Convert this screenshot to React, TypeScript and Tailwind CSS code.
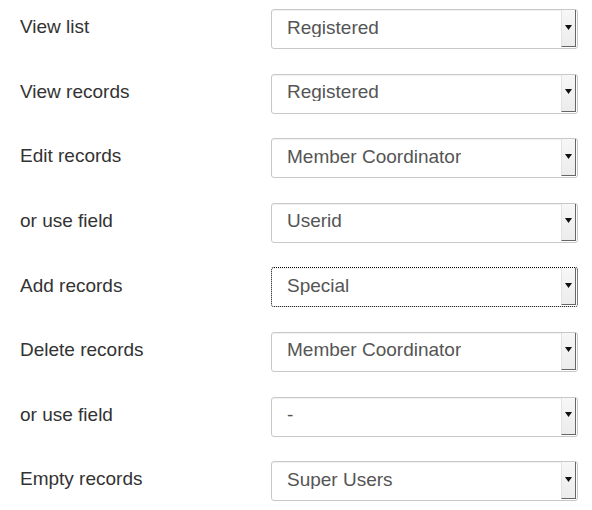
import React from 'react';

const rows: Array<{ label: string; value: string; focused?: boolean }> = [
  { label: 'View list', value: 'Registered' },
  { label: 'View records', value: 'Registered' },
  { label: 'Edit records', value: 'Member Coordinator' },
  { label: 'or use field', value: 'Userid' },
  { label: 'Add records', value: 'Special', focused: true },
  { label: 'Delete records', value: 'Member Coordinator' },
  { label: 'or use field', value: '-' },
  { label: 'Empty records', value: 'Super Users' },
];

const FakeSelect = ({ value, focused }: { value: string; focused?: boolean }) => (
  <div
    className={`relative flex h-[40px] w-[307px] items-center rounded-[3px] bg-white pl-[15px] text-[19px] text-[#555] shadow-[inset_0_1px_1px_rgba(0,0,0,0.06)] ${
      focused ? 'border border-dotted border-black' : 'border border-[#c8c8c8]'
    }`}
  >
    <span className="-mt-[4px] truncate leading-none">{value}</span>
    <div className="absolute right-[1px] top-[0px] bottom-[1px] flex w-[15px] items-center justify-center border-l border-l-[#e2e2e2] border-r-[1.5px] border-r-[#666] border-b-[1.5px] border-b-[#666] bg-gradient-to-b from-[#f7f7f7] to-[#ececec]">
      <svg width="7" height="5" viewBox="0 0 7 5" className="-mt-[2px]">
        <path d="M0 0h7L3.5 5z" fill="#111" />
      </svg>
    </div>
  </div>
);

export default function App() {
  return (
    <div
      className="h-[510px] w-[592px] bg-white pt-[9px]"
      style={{ fontFamily: '"Liberation Sans", Arial, sans-serif' }}
    >
      <div className="flex flex-col gap-[24.6px]">
        {rows.map((row, i) => (
          <div key={i} className="flex items-center">
            <div className="w-[271px] pl-[20px] -mt-[3px] text-[19px] text-[#333]">{row.label}</div>
            <FakeSelect value={row.value} focused={row.focused} />
          </div>
        ))}
      </div>
    </div>
  );
}
